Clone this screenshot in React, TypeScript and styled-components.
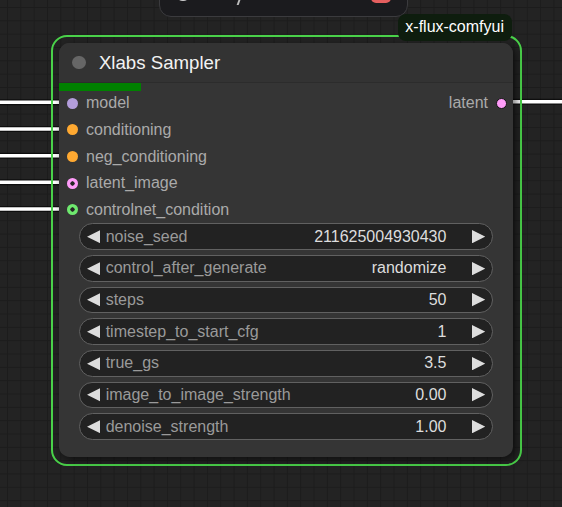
import React from 'react'
import styled, { createGlobalStyle } from 'styled-components'

const GlobalStyle = createGlobalStyle`
  html, body {
    margin: 0;
    padding: 0;
    background: #232323;
  }
  body {
    font-family: "Liberation Sans", Arial, Helvetica, sans-serif;
  }
`

const inputs = [
  { name: 'model', color: '#b39ddb', hollow: false },
  { name: 'conditioning', color: '#ffa931', hollow: false },
  { name: 'neg_conditioning', color: '#ffa931', hollow: false },
  { name: 'latent_image', color: '#ff9cf9', hollow: true },
  { name: 'controlnet_condition', color: '#6ee86e', hollow: true },
]

const widgets = [
  { name: 'noise_seed', value: '211625004930430' },
  { name: 'control_after_generate', value: 'randomize' },
  { name: 'steps', value: '50' },
  { name: 'timestep_to_start_cfg', value: '1' },
  { name: 'true_gs', value: '3.5' },
  { name: 'image_to_image_strength', value: '0.00' },
  { name: 'denoise_strength', value: '1.00' },
]

// wire y positions (slot centres on the canvas)
const inputWires = [102.3, 129, 155.7, 182.3, 209]

const App = () => {
  return (
    <>
      <GlobalStyle />
      <Canvas>
        <Links width="562" height="507">
          {inputWires.map((y) => (
            <g key={y}>
              <line x1={0} y1={y} x2={62} y2={y} stroke="rgba(0,0,0,0.6)" strokeWidth={6} />
              <line x1={0} y1={y} x2={62} y2={y} stroke="#ffffff" strokeWidth={3.5} />
            </g>
          ))}
          <line x1={510} y1={101.7} x2={562} y2={101.7} stroke="rgba(0,0,0,0.6)" strokeWidth={6} />
          <line x1={510} y1={101.7} x2={562} y2={101.7} stroke="#ffffff" strokeWidth={3.5} />
        </Links>

        <ActionBar>
          <RingIcon />
          <Tick />
          <ColorSpeck />
          <StopButton />
        </ActionBar>

        <Selection>
          <Badge>x-flux-comfyui</Badge>
          <Node>
            <TitleBar>
              <TitleDot />
              <Title>Xlabs Sampler</Title>
            </TitleBar>
            <Body>
              <Progress />
              <Slots>
                <InputCol>
                  {inputs.map((s) => (
                    <SlotRow key={s.name}>
                      <Dot color={s.color} $hollow={s.hollow} />
                      <SlotLabel>{s.name}</SlotLabel>
                    </SlotRow>
                  ))}
                </InputCol>
                <OutputCol>
                  <SlotRow>
                    <SlotLabel>latent</SlotLabel>
                    <OutDot />
                  </SlotRow>
                </OutputCol>
              </Slots>
              <Widgets>
                {widgets.map((w) => (
                  <Widget key={w.name}>
                    <Arrow dir="left" />
                    <WidgetLabel>{w.name}</WidgetLabel>
                    <WidgetValue>{w.value}</WidgetValue>
                    <Arrow dir="right" />
                  </Widget>
                ))}
              </Widgets>
            </Body>
          </Node>
        </Selection>
      </Canvas>
    </>
  )
}

const Arrow = ({ dir }: { dir: 'left' | 'right' }) => (
  <ArrowSvg viewBox="0 0 10 10">
    <polygon points={dir === 'left' ? '10,0 0,5 10,10' : '0,0 10,5 0,10'} fill="#dddddd" />
  </ArrowSvg>
)

const Canvas = styled.div`
  position: relative;
  width: 562px;
  height: 507px;
  overflow: hidden;
  background-color: #232323;
  background-image: linear-gradient(#1c1c1c 1px, transparent 1px),
    linear-gradient(90deg, #1c1c1c 1px, transparent 1px);
  background-size: 13.333px 13.333px;
  background-position: 7px 7px;
`

const Links = styled.svg`
  position: absolute;
  left: 0;
  top: 0;
`

const ActionBar = styled.div`
  position: absolute;
  left: 159px;
  top: -31px;
  width: 249px;
  height: 48px;
  box-sizing: border-box;
  display: flex;
  align-items: center;
  padding: 0 16px 0 15px;
  background: #1b1b1e;
  border: 1px solid #3b3b3e;
  border-radius: 12px;
`

const RingIcon = styled.div`
  width: 16px;
  height: 16px;
  box-sizing: border-box;
  border: 2px solid #d0d0d0;
  border-radius: 50%;
`

const Tick = styled.div`
  margin-left: 50px;
  width: 2px;
  height: 24px;
  background: #bdbdbd;
  transform: skewX(-20deg);
`

const ColorSpeck = styled.div`
  margin-left: 72px;
  width: 3px;
  height: 12px;
  background: #e9a04a;
  border-radius: 2px;
`

const StopButton = styled.div`
  margin-left: auto;
  width: 20px;
  height: 20px;
  border-radius: 5px;
  background: #e55f5f;
`

const Selection = styled.div`
  position: absolute;
  left: 51px;
  top: 35px;
  padding: 6px 7px 7px 6px;
  border: 2px solid #4ad24a;
  border-radius: 16px;
`

const Badge = styled.div`
  position: absolute;
  top: -23px;
  right: 8px;
  height: 26.67px;
  line-height: 26.67px;
  padding: 0 8px 0 7px;
  border-radius: 8px;
  background: #0e1d0e;
  color: #ffffff;
  font-size: 16px;
  white-space: nowrap;
`

const Node = styled.div`
  width: 454px;
  background: #353535;
  border-radius: 10.67px;
  box-shadow: 3px 3px 8px rgba(0, 0, 0, 0.55);
`

const TitleBar = styled.div`
  height: 39.3px;
  display: flex;
  align-items: center;
  padding-left: 13.3px;
  gap: 13.3px;
  background: #333333;
  border-bottom: 1px solid #2c2c2c;
  border-radius: 10.67px 10.67px 0 0;
`

const TitleDot = styled.div`
  width: 13.3px;
  height: 13.3px;
  border-radius: 50%;
  background: #666666;
`

const Title = styled.span`
  font-size: 18.67px;
  color: #f2f2f2;
`

const Body = styled.div`
  position: relative;
  padding-top: 6.7px;
`

const Progress = styled.div`
  position: absolute;
  left: 0;
  top: 0;
  width: 82px;
  height: 7.7px;
  background: #008000;
`

const Slots = styled.div`
  display: flex;
  justify-content: space-between;
`

const InputCol = styled.div`
  display: flex;
  flex-direction: column;
  padding-left: 8px;
`

const OutputCol = styled.div`
  display: flex;
  flex-direction: column;
  align-items: flex-end;
  padding-right: 6px;
`

const SlotRow = styled.div`
  height: 26.67px;
  display: flex;
  align-items: center;
  gap: 8px;
`

const Dot = styled.div<{ color: string; $hollow: boolean }>`
  width: 11px;
  height: 11px;
  border-radius: 50%;
  background: ${({ color, $hollow }) =>
    $hollow ? `radial-gradient(circle, #252525 0 1.9px, ${color} 2.4px)` : color};
`

const OutDot = styled.div`
  width: 11px;
  height: 11px;
  box-sizing: border-box;
  border-radius: 50%;
  background: #ff9cf9;
  border: 1px solid #151515;
`

const SlotLabel = styled.span`
  font-size: 16px;
  color: #aaaaaa;
  white-space: nowrap;
`

const Widgets = styled.div`
  display: flex;
  flex-direction: column;
  gap: 5px;
  padding: 0 19.7px 16.7px 20px;
`

const Widget = styled.div`
  height: 26.67px;
  box-sizing: border-box;
  display: flex;
  align-items: center;
  padding: 0 7.3px 0 6.7px;
  background: #222222;
  border: 1px solid #616161;
  border-radius: 14px;
  font-size: 16px;
`

const ArrowSvg = styled.svg`
  width: 13.3px;
  height: 13.3px;
  flex: none;
`

const WidgetLabel = styled.span`
  margin-left: 5.7px;
  color: #9a9a9a;
  white-space: nowrap;
`

const WidgetValue = styled.span`
  margin-left: auto;
  margin-right: 25.3px;
  color: #dddddd;
  white-space: nowrap;
`

export default App
